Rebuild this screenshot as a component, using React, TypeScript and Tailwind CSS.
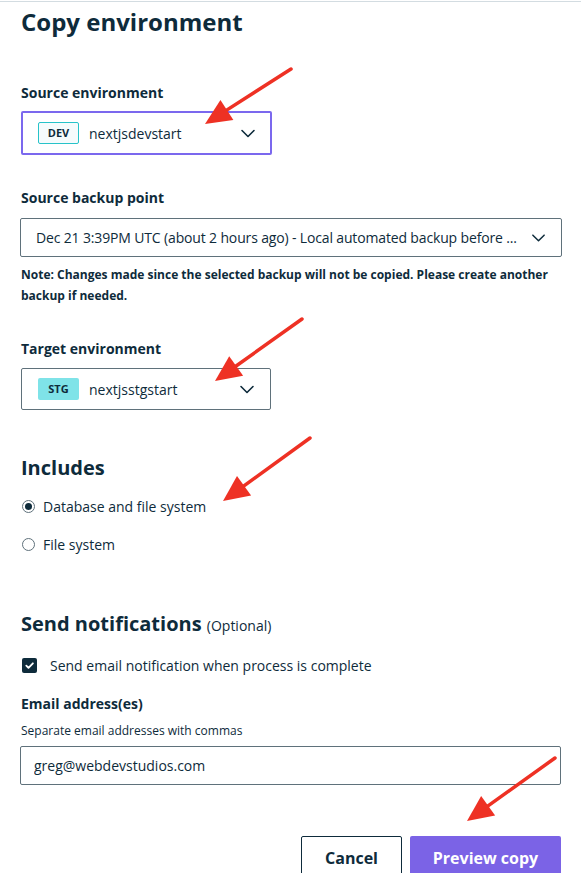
import { useState } from "react";

const Chevron = ({ className = "" }: { className?: string }) => (
  <svg viewBox="0 0 16 16" className={className} fill="none" stroke="currentColor" strokeWidth={1.6} strokeLinecap="round" strokeLinejoin="round">
    <path d="M2 5.5l6 6 6-6" />
  </svg>
);

// red annotation arrows sitting on top of the form
const Arrow = ({ x1, y1, x2, y2 }: { x1: number; y1: number; x2: number; y2: number }) => {
  const dx = x2 - x1;
  const dy = y2 - y1;
  const len = Math.sqrt(dx * dx + dy * dy);
  const ux = dx / len;
  const uy = dy / len;
  const head = 26;
  const w = 12;
  const bx = x2 - ux * head;
  const by = y2 - uy * head;
  const pts = `${x2},${y2} ${bx - uy * w},${by + ux * w} ${bx + uy * w},${by - ux * w}`;
  return (
    <g>
      <line x1={x1} y1={y1} x2={bx + ux * 4} y2={by + uy * 4} stroke="#ee3124" strokeWidth={3.5} strokeLinecap="round" />
      <polygon points={pts} fill="#ee3124" />
    </g>
  );
};

const Label = ({ children }: { children: React.ReactNode }) => (
  <div className="text-[14px] leading-[20px] font-bold text-[#0e2b3b]">{children}</div>
);

const App = () => {
  const [includes, setIncludes] = useState("both");
  const [notify, setNotify] = useState(true);

  return (
    <div
      className="relative w-[581px] h-[873px] overflow-hidden bg-white text-[#0e2b3b]"
      style={{ fontFamily: '"Open Sans", "Liberation Sans", sans-serif' }}
    >
      <div className="mt-px h-px bg-[#d3dce1]" />

      <div className="pl-[21px] pr-[20px]">
        <h1 className="mt-[4px] text-[24px] leading-[32px] font-bold">Copy environment</h1>

        <div className="mt-[45px]">
          <Label>Source environment</Label>
          <button className="mt-[8px] w-[251px] h-[44px] border-2 border-[#7b68ee] rounded-[2px] flex items-center pl-[15px] pr-[14px]">
            <span className="w-[41px] h-[22px] border border-[#27c3c9] rounded-[2px] bg-[#f5fbfc] text-[11px] font-bold flex items-center justify-center">
              DEV
            </span>
            <span className="ml-[10px] text-[14px]">nextjsdevstart</span>
            <Chevron className="ml-auto w-[16px] h-[16px] text-[#0e2b3b]" />
          </button>
        </div>

        <div className="mt-[33px]">
          <Label>Source backup point</Label>
          <button className="mt-[10px] -ml-px w-[542px] h-[39px] border border-[#5f717b] rounded-[2px] flex items-center pl-[15px] pr-[15px]">
            <span className="text-[14px] tracking-[-0.15px] whitespace-nowrap">
              Dec 21 3:39PM UTC (about 2 hours ago) - Local automated backup before ...
            </span>
            <Chevron className="ml-auto w-[15px] h-[15px] text-[#0e2b3b]" />
          </button>
          <p className="mt-[7px] text-[12px] leading-[21px] font-bold">
            Note: Changes made since the selected backup will not be copied. Please create another backup if needed.
          </p>
        </div>

        <div className="mt-[33px]">
          <Label>Target environment</Label>
          <button className="mt-[9px] w-[250px] h-[42px] border border-[#5f717b] rounded-[2px] flex items-center pl-[16px] pr-[15px]">
            <span className="w-[41px] h-[22px] rounded-[2px] bg-[#7fe3e8] text-[11px] font-bold flex items-center justify-center">
              STG
            </span>
            <span className="ml-[10px] text-[14px]">nextjsstgstart</span>
            <Chevron className="ml-auto w-[16px] h-[16px] text-[#0e2b3b]" />
          </button>
        </div>

        <h2 className="mt-[44px] text-[20px] leading-[28px] font-bold">Includes</h2>
        <div className="mt-[12px] flex flex-col gap-[14px]">
          {[
            { id: "both", text: "Database and file system" },
            { id: "files", text: "File system" },
          ].map((o) => (
            <label key={o.id} className="h-[24px] flex items-center cursor-pointer" onClick={() => setIncludes(o.id)}>
              <span className="ml-[1px] w-[13px] h-[13px] rounded-full border border-[#5f717b] flex items-center justify-center">
                {includes === o.id && <span className="w-[7px] h-[7px] rounded-full bg-[#0e2b3b]" />}
              </span>
              <span className="ml-[8px] text-[14px]">{o.text}</span>
            </label>
          ))}
        </div>

        <h2 className="mt-[54px] text-[20px] leading-[28px] font-bold">
          Send notifications <span className="text-[14px] font-normal">(Optional)</span>
        </h2>
        <label className="mt-[13px] h-[24px] flex items-center cursor-pointer" onClick={() => setNotify(!notify)}>
          <span className="ml-[1px] w-[15px] h-[15px] rounded-[2px] bg-[#0e2b3b] flex items-center justify-center">
            {notify && (
              <svg viewBox="0 0 12 12" className="w-[11px] h-[11px]" fill="none" stroke="white" strokeWidth={2} strokeLinecap="round" strokeLinejoin="round">
                <path d="M2.5 6.2l2.4 2.4 4.8-5" />
              </svg>
            )}
          </span>
          <span className="ml-[13px] text-[14px]">Send email notification when process is complete</span>
        </label>

        <div className="mt-[17px]">
          <Label>Email address(es)</Label>
          <div className="mt-[8px] text-[12px] leading-[18px]">Separate email addresses with commas</div>
          <input
            defaultValue="greg@webdevstudios.com"
            className="mt-[6px] -ml-px w-[541px] h-[39px] border border-[#5f717b] rounded-[2px] px-[13px] text-[14px] outline-none"
          />
        </div>

        <div className="mt-[51px] flex justify-end gap-[8px]">
          <button className="w-[101px] h-[44px] border border-[#0e2b3b] rounded-[2px] text-[16px] font-bold">Cancel</button>
          <button className="w-[151px] h-[44px] rounded-[2px] bg-[#7b63e6] text-white text-[16px] font-bold">Preview copy</button>
        </div>
      </div>

      <svg className="absolute inset-0 pointer-events-none" width={581} height={873}>
        <Arrow x1={291} y1={69} x2={205} y2={124} />
        <Arrow x1={302} y1={319} x2={215} y2={381} />
        <Arrow x1={310} y1={438} x2={223} y2={501} />
        <Arrow x1={555} y1={758} x2={467} y2={821} />
      </svg>
    </div>
  );
};

export default App;
